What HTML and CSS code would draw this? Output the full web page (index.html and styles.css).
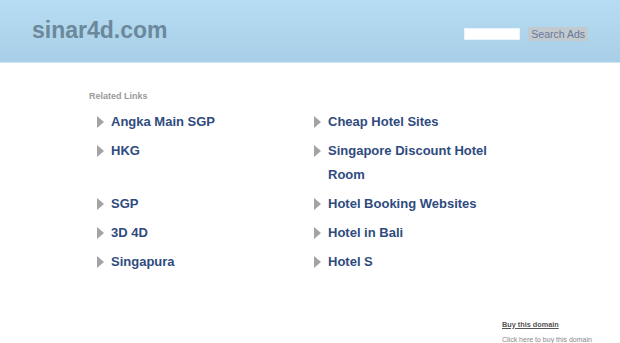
FILE: index.html
```html
<!DOCTYPE html>
<html lang="en">
<head>
<meta charset="UTF-8" />
<title>sinar4d.com</title>
<meta name="viewport" content="width=device-width, initial-scale=1" />
<link rel="stylesheet" href="styles.css">
</head>
<body>

<!-- header -->
<div class="header">
  <div class="logo">sinar4d.com</div>
  <form class="search-box" onsubmit="return false">
    <input type="text" class="search-input">
    <button class="search-btn">Search Ads</button>
  </form>
</div>

<!-- related links -->
<div class="content">
  <div class="section-title">Related Links</div>
  <ul class="link-list">
    <li><a href="#">Angka Main SGP</a></li>
    <li><a href="#">Cheap Hotel Sites</a></li>
    <li><a href="#">HKG</a></li>
    <li><a href="#">Singapore Discount Hotel Room</a></li>
    <li><a href="#">SGP</a></li>
    <li><a href="#">Hotel Booking Websites</a></li>
    <li><a href="#">3D 4D</a></li>
    <li><a href="#">Hotel in Bali</a></li>
    <li><a href="#">Singapura</a></li>
    <li><a href="#">Hotel S</a></li>
  </ul>
</div>

<div class="footer">
  <a href="#" class="buy-link">Buy this domain</a>
  <div class="buy-note">Click here to buy this domain</div>
</div>

</body>
</html>
```

FILE: styles.css
```css
body { font-family: "Liberation Sans", Arial, sans-serif; background: #fff; margin: 0; padding: 0; }
.header { display: flex; align-items: center; justify-content: space-between; height: 62px; padding: 0 32px; background: linear-gradient(to bottom, #b6ddf3, #a8cfe7); border-bottom: 1px solid #cce6f4; }
.logo { font-size: 23px; font-weight: bold; color: #6c889b; margin-top: -1px; }
.search-box { display: flex; align-items: center; gap: 8px; margin: 6px 0 0 0; }
.search-input { width: 54px; height: 10px; padding: 0; border: 1px solid #e6f3fb; background: #fff; }
.search-btn { height: 14px; padding: 0 3px; border: none; background: #c2cacf; color: #68789a; font-family: "Liberation Sans", Arial, sans-serif; font-size: 10.5px; line-height: 14px; }
.content { padding: 27px 0 0 89px; }
.section-title { font-size: 9px; line-height: 12px; font-weight: bold; color: #9a9a9a; }
.link-list { list-style: none; margin: 8px 0 0 8px; padding: 0; display: grid; grid-template-columns: 203px 200px; column-gap: 14px; row-gap: 4.9px; align-items: start; }
.link-list li { position: relative; padding-left: 14px; font-size: 13px; line-height: 24px; }
.link-list li::before { content: ""; position: absolute; left: 0; top: 6px; border-left: 7px solid #a3a3a3; border-top: 6px solid transparent; border-bottom: 6px solid transparent; }
.link-list a { font-weight: bold; color: #2f4b7e; text-decoration: none; }
.footer { margin: 46px 0 0 502px; }
.buy-link { display: block; font-size: 7.3px; line-height: 10px; font-weight: bold; color: #555; text-decoration: underline; }
.buy-note { font-size: 7px; line-height: 10px; color: #888; margin-top: 5px; }
```
